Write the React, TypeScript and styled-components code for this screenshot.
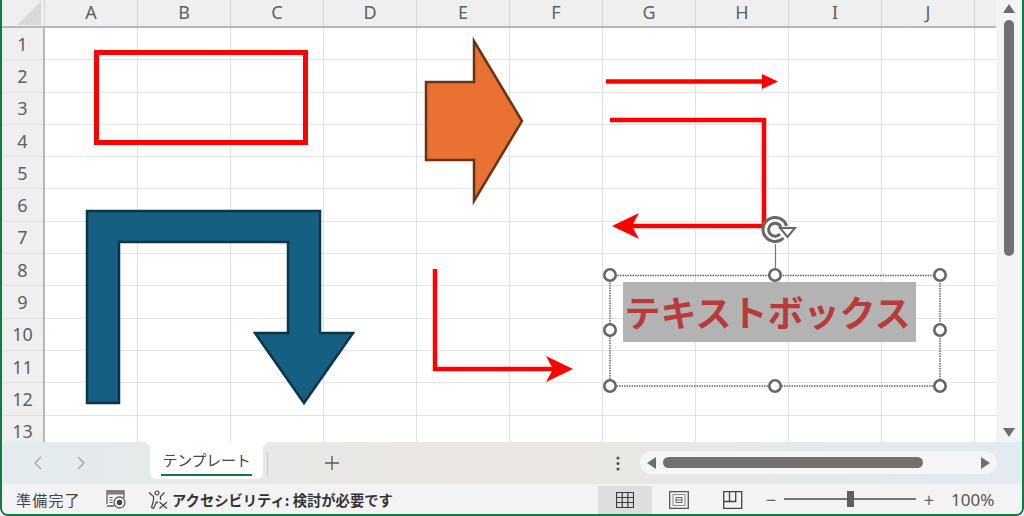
import React from 'react';
import styled, { createGlobalStyle } from 'styled-components';

const COLUMNS = ['A', 'B', 'C', 'D', 'E', 'F', 'G', 'H', 'I', 'J', ''];
const ROWS = Array.from({ length: 13 }, (_, i) => i + 1);
const JP_FONT = `'Noto Sans CJK JP', 'Noto Sans', sans-serif`;
const HANDLES = [
  [610, 275],
  [775, 275],
  [940, 275],
  [610, 330],
  [940, 330],
  [610, 386],
  [775, 386],
  [940, 386],
];

const DrawingLayer = () => (
  <Drawing viewBox='45 28 951 414'>
    <rect x='96.5' y='52.5' width='209' height='90' fill='none' stroke='#ff0000' strokeWidth='5' />
    <polygon
      points='87,403 87,211 320,211 320,333 353,333 304,403 255,333 288,333 288,242 119,242 119,403'
      fill='#156082'
      stroke='#0c3547'
      strokeWidth='2.5'
    />
    <polygon
      points='426,82 474,82 474,41 522,121 474,201 474,160 426,160'
      fill='#e97132'
      stroke='#6a3414'
      strokeWidth='2.5'
    />
    <path d='M606 81.5H765' stroke='#ff0000' strokeWidth='4.5' fill='none' />
    <polygon points='762,74 778,81.5 762,89' fill='#ff0000' />
    <path d='M610 120H764V226H628' stroke='#ff0000' strokeWidth='4.5' fill='none' />
    <polygon points='612,226 639,213 632,226 639,239' fill='#ff0000' />
    <path d='M435 269V369H556' stroke='#ff0000' strokeWidth='4.5' fill='none' />
    <polygon points='573,369 546,356 553,369 546,382' fill='#ff0000' />

    <rect x='610' y='275.5' width='330' height='110.5' fill='none' stroke='#666' strokeWidth='1.5' strokeDasharray='1.5 1' />
    <path d='M775.5 244V270' stroke='#777' strokeWidth='1.2' />
    {HANDLES.map(([cx, cy]) => (
      <circle key={`${cx}-${cy}`} cx={cx} cy={cy} r='5.7' fill='#fff' stroke='#666' strokeWidth='2.6' />
    ))}
    <circle cx='775' cy='229' r='13' fill='#fff' />
    <path d='M783.5 238A12 12 0 1 1 786.5 226' fill='none' stroke='#666' strokeWidth='3' />
    <path d='M780 234A6.5 6.5 0 1 1 781 227' fill='none' stroke='#666' strokeWidth='3' />
    <polygon points='780,228 795,228 787.5,237' fill='#fff' stroke='#666' strokeWidth='2' />
  </Drawing>
);

const BackIcon = () => (
  <svg width='10' height='14' viewBox='0 0 10 14'>
    <path d='M8 1L2 7l6 6' fill='none' stroke='#a3a3a3' strokeWidth='1.3' />
  </svg>
);

const ForwardIcon = () => (
  <svg width='10' height='14' viewBox='0 0 10 14'>
    <path d='M2 1l6 6-6 6' fill='none' stroke='#a3a3a3' strokeWidth='1.3' />
  </svg>
);

const PlusIcon = () => (
  <svg width='16' height='16' viewBox='0 0 16 16'>
    <path d='M8 1v14M1 8h14' stroke='#555' strokeWidth='1.3' />
  </svg>
);

const MoreIcon = () => (
  <svg width='4' height='15' viewBox='0 0 4 15'>
    <circle cx='2' cy='2' r='1.6' fill='#555' />
    <circle cx='2' cy='7.5' r='1.6' fill='#555' />
    <circle cx='2' cy='13' r='1.6' fill='#555' />
  </svg>
);

const MacroIcon = () => (
  <svg width='20' height='19' viewBox='0 0 20 19'>
    <path d='M1 14V1h17v7' fill='none' stroke='#5c5c5c' strokeWidth='1.3' />
    <path d='M1 1h17v3.5H1z' fill='#7c7c7c' />
    <path d='M3.5 7.5h3M3.5 10h3M3.5 12.5h3' stroke='#5c5c5c' strokeWidth='1.1' />
    <path d='M1 16h7' stroke='#5c5c5c' strokeWidth='1.3' />
    <circle cx='13.5' cy='12.5' r='5.5' fill='#f3f3f3' stroke='#5c5c5c' strokeWidth='1.3' />
    <circle cx='13.5' cy='12.5' r='2.7' fill='#444' />
  </svg>
);

const AccessibilityIcon = () => (
  <svg width='20' height='19' viewBox='0 0 20 19'>
    <circle cx='9' cy='3' r='2' fill='none' stroke='#444' strokeWidth='1.2' />
    <path
      d='M1 2.5l4.5 4v4L3.5 17.5l2 1 3-6.5 1.500 1M16.500 2.500L12.500 6.500V10'
      fill='none'
      stroke='#444'
      strokeWidth='1.2'
    />
    <path d='M11.500 12l7.500 6.500M19 12l-7.500 6.500' fill='none' stroke='#444' strokeWidth='1.2' />
  </svg>
);

const NormalViewIcon = () => (
  <svg width='18' height='16' viewBox='0 0 18 16'>
    <path d='M.5.5h17v15H.5zM6.2.5v15M11.8.5v15M.5 5.5h17M.5 10.5h17' fill='none' stroke='#3d3d3d' strokeWidth='1.2' />
  </svg>
);

const PageLayoutIcon = () => (
  <svg width='20' height='18' viewBox='0 0 20 18'>
    <path d='M.7.7h18.6v16.600H.7z' fill='none' stroke='#555' strokeWidth='1.3' />
    <path d='M4 3.5h12v11H4z' fill='none' stroke='#888' strokeWidth='1' />
    <path d='M7 6.5h6v5H7zM7 9h6' fill='none' stroke='#666' strokeWidth='1' />
  </svg>
);

const PageBreakIcon = () => (
  <svg width='20' height='18' viewBox='0 0 20 18'>
    <path d='M.7.7h18v16.6h-18zM.7 10.5h12V.7M6.5.7v9.8' fill='none' stroke='#444' strokeWidth='1.3' />
  </svg>
);

const App: React.FC = () => (
  <>
    <GlobalStyle />
    <Frame>
      <Workspace>
        <SheetColumn>
          <ColumnHeader>
            <Corner>
              <svg width='26' height='26' viewBox='0 0 26 26'>
                <polygon points='1,25 25,25 25,1' fill='#d9d9d9' />
              </svg>
            </Corner>
            {COLUMNS.map((name, index) => (
              <ColumnLabel key={index} $last={index === COLUMNS.length - 1}>
                {name}
              </ColumnLabel>
            ))}
          </ColumnHeader>

          <Body>
            <RowHeader>
              {ROWS.map((row) => (
                <RowLabel key={row}>{row}</RowLabel>
              ))}
            </RowHeader>
            <Sheet>
              <Grid>
                {ROWS.flatMap((row) =>
                  COLUMNS.map((name, index) => <Cell key={`${row}-${index}`} $last={name === ''} />),
                )}
              </Grid>
              <DrawingLayer />
              <TextBox>テキストボックス</TextBox>
            </Sheet>
          </Body>
        </SheetColumn>
        <VerticalScroll>
          <ArrowUp />
          <VerticalThumb />
          <ArrowDown />
        </VerticalScroll>
      </Workspace>

      <TabBar>
        <TabNav>
          <BackIcon />
          <ForwardIcon />
        </TabNav>
        <Tab>
          <TabName>テンプレート</TabName>
        </Tab>
        <TabDivider />
        <AddSheet>
          <PlusIcon />
        </AddSheet>
        <More>
          <MoreIcon />
        </More>
        <HorizontalScroll>
          <ArrowLeft />
          <HorizontalThumb />
          <ArrowRight />
        </HorizontalScroll>
      </TabBar>

      <StatusBar>
        <ReadyText>準備完了</ReadyText>
        <StatusIcon>
          <MacroIcon />
        </StatusIcon>
        <Accessibility>
          <AccessibilityIcon />
          <strong>アクセシビリティ: 検討が必要です</strong>
        </Accessibility>
        <ViewButton $active>
          <NormalViewIcon />
        </ViewButton>
        <ViewButton>
          <PageLayoutIcon />
        </ViewButton>
        <ViewButton>
          <PageBreakIcon />
        </ViewButton>
        <Zoom>
          <ZoomSign>−</ZoomSign>
          <ZoomTrack>
            <ZoomThumb />
          </ZoomTrack>
          <ZoomSign>+</ZoomSign>
        </Zoom>
        <ZoomValue>100%</ZoomValue>
      </StatusBar>
    </Frame>
  </>
);

const GlobalStyle = createGlobalStyle`
  html, body {
    margin: 0;
    background: #fff;
    overflow: hidden;
  }
`;

const Frame = styled.div`
  box-sizing: border-box;
  width: 1024px;
  height: 516px;
  border: 2px solid #107c41;
  border-top: 0;
  border-radius: 0 0 8px 8px;
  overflow: hidden;
  display: flex;
  flex-direction: column;
  font-family: 'Noto Sans', 'Liberation Sans', sans-serif;
  background: #f3f3f3;
`;

const Workspace = styled.div`
  height: 442px;
  flex: none;
  display: flex;
`;

const SheetColumn = styled.div`
  width: 994px;
  flex: none;
  display: flex;
  flex-direction: column;
`;

const ColumnHeader = styled.div`
  box-sizing: border-box;
  height: 28px;
  display: flex;
  flex: none;
  background: #efefef;
  border-bottom: 2px solid #b8b8b8;
`;

const Corner = styled.div`
  box-sizing: border-box;
  width: 43px;
  flex: none;
  border-right: 1px solid #d4d4d4;
  display: flex;
  justify-content: flex-end;
  align-items: flex-end;
  padding-right: 2px;
  svg {
    display: block;
  }
`;

const ColumnLabel = styled.div<{ $last?: boolean }>`
  box-sizing: border-box;
  width: ${(p) => (p.$last ? '21px' : '93px')};
  flex: none;
  border-right: ${(p) => (p.$last ? '0' : '1px solid #d4d4d4')};
  font-size: 18px;
  line-height: 24px;
  text-align: center;
  color: #5f5f5f;
`;

const Body = styled.div`
  height: 414px;
  flex: none;
  display: flex;
  overflow: hidden;
`;

const RowHeader = styled.div`
  box-sizing: border-box;
  width: 43px;
  flex: none;
  background: #efefef;
  border-right: 2px solid #b8b8b8;
  display: grid;
  grid-auto-rows: 32.3px;
`;

const RowLabel = styled.div`
  display: flex;
  align-items: center;
  justify-content: center;
  border-bottom: 1px solid #e2e2e2;
  font-size: 18px;
  color: #5f5f5f;
`;

const Sheet = styled.div`
  position: relative;
  width: 951px;
  flex: none;
  background: #fff;
  overflow: hidden;
`;

const Grid = styled.div`
  display: grid;
  grid-template-columns: repeat(10, 93px) 21px;
  grid-auto-rows: 32.3px;
`;

const Cell = styled.div<{ $last?: boolean }>`
  box-sizing: border-box;
  border-right: ${(p) => (p.$last ? '0' : '1px solid #e0e0e0')};
  border-bottom: 1px solid #e4e4e4;
`;

const Drawing = styled.svg`
  position: absolute;
  inset: 0;
  width: 951px;
  height: 414px;
`;

const TextBox = styled.div`
  position: absolute;
  left: 578px;
  top: 254px;
  box-sizing: border-box;
  width: 293px;
  height: 60px;
  padding-right: 4px;
  background: #b3b3b3;
  color: #b93a3a;
  font-family: ${JP_FONT};
  font-size: 36px;
  font-weight: 700;
  line-height: 58px;
  text-align: center;
  white-space: nowrap;
`;

const VerticalScroll = styled.div`
  flex: 1;
  background: #f4f4f4;
  display: flex;
  flex-direction: column;
  align-items: center;
  padding-top: 4px;
  border-radius: 0 0 8px 8px;
`;

const ArrowUp = styled.div`
  width: 0;
  height: 0;
  border-left: 6px solid transparent;
  border-right: 6px solid transparent;
  border-bottom: 9px solid #6e6e6e;
`;

const ArrowDown = styled.div`
  width: 0;
  height: 0;
  margin-top: 172px;
  border-left: 6px solid transparent;
  border-right: 6px solid transparent;
  border-top: 9px solid #6e6e6e;
`;

const VerticalThumb = styled.div`
  width: 10px;
  height: 236px;
  margin-top: 7px;
  border-radius: 5px;
  background: #707070;
`;

const TabBar = styled.div`
  height: 42px;
  flex: none;
  display: flex;
  background: linear-gradient(90deg, #e2ebef 0%, #e8e9e7 25%, #ebe6e2 45%, #e9e7e4 60%, #e4e9ec 85%, #e2ebf0 100%);
`;

const TabNav = styled.div`
  width: 148px;
  box-sizing: border-box;
  padding-left: 31px;
  display: flex;
  gap: 33px;
  align-items: center;
  height: 42px;
  flex: none;
`;

const Tab = styled.div`
  position: relative;
  box-sizing: border-box;
  width: 113px;
  height: 37px;
  flex: none;
  background: #fff;
  border-radius: 0 0 7px 7px;
  display: flex;
  justify-content: center;
  &::before,
  &::after {
    content: '';
    position: absolute;
    top: 0;
    width: 8px;
    height: 8px;
  }
  &::before {
    left: -8px;
    background: radial-gradient(circle at 0 100%, transparent 8px, #fff 8.5px);
  }
  &::after {
    right: -8px;
    background: radial-gradient(circle at 100% 100%, transparent 8px, #fff 8.5px);
  }
`;

const TabName = styled.div`
  box-sizing: border-box;
  width: 91px;
  height: 34px;
  border-bottom: 2.5px solid #107c41;
  font-family: ${JP_FONT};
  font-size: 15px;
  letter-spacing: -0.3px;
  line-height: 36px;
  text-align: center;
  color: #444;
  white-space: nowrap;
`;

const TabDivider = styled.div`
  width: 1px;
  height: 25px;
  margin: 10px 0 0 4px;
  background: #c9c9c9;
  flex: none;
`;

const AddSheet = styled.div`
  width: 127px;
  flex: none;
  display: flex;
  align-items: center;
  justify-content: center;
`;

const More = styled.div`
  width: 4px;
  margin-left: 221px;
  flex: none;
  display: flex;
  align-items: center;
`;

const HorizontalScroll = styled.div`
  width: 357px;
  height: 23px;
  margin: 9px 0 0 20px;
  flex: none;
  border-radius: 12px;
  background: #f3f5f6;
  display: flex;
  align-items: center;
`;

const ArrowLeft = styled.div`
  width: 0;
  height: 0;
  margin-left: 7px;
  border-top: 6px solid transparent;
  border-bottom: 6px solid transparent;
  border-right: 9px solid #6e6e6e;
`;

const ArrowRight = styled.div`
  width: 0;
  height: 0;
  margin-left: 58px;
  border-top: 6px solid transparent;
  border-bottom: 6px solid transparent;
  border-left: 9px solid #6e6e6e;
`;

const HorizontalThumb = styled.div`
  width: 260px;
  height: 11px;
  margin-left: 7px;
  border-radius: 6px;
  background: #707070;
`;

const StatusBar = styled.div`
  flex: 1;
  display: flex;
  align-items: center;
  background: #f3f3f3;
  font-family: ${JP_FONT};
  color: #444;
`;

const ReadyText = styled.div`
  margin-left: 14px;
  width: 90px;
  flex: none;
  font-size: 15px;
  letter-spacing: 1.2px;
`;

const StatusIcon = styled.div`
  width: 42px;
  flex: none;
  display: flex;
`;

const Accessibility = styled.div`
  width: 450px;
  flex: none;
  display: flex;
  align-items: center;
  gap: 4px;
  font-size: 14.3px;
  color: #333;
  strong {
    font-weight: 700;
  }
`;

const ViewButton = styled.div<{ $active?: boolean }>`
  width: 54px;
  height: 28px;
  margin-top: 2px;
  flex: none;
  display: flex;
  align-items: center;
  justify-content: center;
  background: ${(p) => (p.$active ? '#dedede' : 'transparent')};
`;

const Zoom = styled.div`
  margin-left: 5px;
  display: flex;
  align-items: center;
  gap: 7px;
`;

const ZoomSign = styled.div`
  width: 12px;
  text-align: center;
  font-size: 18px;
  line-height: 20px;
  color: #666;
`;

const ZoomTrack = styled.div`
  position: relative;
  width: 132px;
  height: 2px;
  background: #777;
`;

const ZoomThumb = styled.div`
  position: absolute;
  left: 63px;
  top: -7px;
  width: 7px;
  height: 16px;
  background: #5f5f5f;
`;

const ZoomValue = styled.div`
  margin-left: 16px;
  font-family: 'Noto Sans', sans-serif;
  font-size: 17px;
  color: #555;
`;

export default App;
